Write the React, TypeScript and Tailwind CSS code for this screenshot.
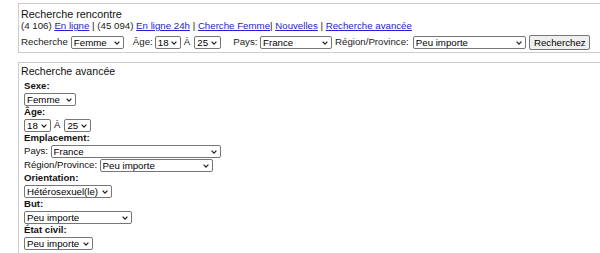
import React from "react";

type SelProps = { className: string; value: string; options?: string[] };

function Sel({ className, value, options }: SelProps) {
  const opts = options ?? [value];
  return (
    <span className={`relative inline-block h-[13px] shrink-0 ${className}`}>
      <select
        defaultValue={value}
        className="block h-full w-full appearance-none rounded-[2px] border border-[#767676] bg-white py-0 pl-[2px] pr-[9px] text-[9.7px] leading-[11px] text-black outline-none"
      >
        {opts.map((o) => (
          <option key={o} value={o}>
            {o}
          </option>
        ))}
      </select>
      <svg
        className="pointer-events-none absolute right-[4px] top-[5px]"
        width="6"
        height="4"
        viewBox="0 0 6 4"
      >
        <path d="M0.6 0.6 L3 3.1 L5.4 0.6" stroke="#222" strokeWidth="1.25" fill="none" />
      </svg>
    </span>
  );
}

function A({ children }: { children: React.ReactNode }) {
  return (
    <a href="#" className="text-[#2323d6] underline">
      {children}
    </a>
  );
}

export default function App() {
  return (
    <div className="h-[253px] w-[600px] overflow-hidden bg-white font-['Liberation_Sans',Arial,sans-serif] text-[#111]">
      {/* Box 1 */}
      <div className="ml-[18px] mt-[3px] w-[640px] border border-[#cccccc] pb-[1px] pl-[2px] pt-[4px]">
        <div className="text-[10.8px] leading-[12px]">Recherche rencontre</div>
        <div className="whitespace-nowrap text-[9.7px] leading-[11px] text-[#222]">
          (4 106) <A>En ligne</A> | (45 094) <A>En ligne 24h</A> | <A>Cherche Femme</A>| <A>Nouvelles</A> |{" "}
          <A>Recherche avancée</A>
        </div>
        <div className="mt-[2px] flex h-[18px] items-center whitespace-nowrap text-[9.7px] text-[#222]">
          <span>Recherche</span>
          <Sel className="ml-[3px] w-[53px]" value="Femme" options={["Femme", "Homme"]} />
          <span className="ml-[9px]">Âge:</span>
          <Sel className="ml-[2px] w-[26px]" value="18" />
          <span className="ml-[3px]">À</span>
          <Sel className="ml-[4px] w-[27px]" value="25" />
          <span className="ml-[12px]">Pays:</span>
          <Sel className="ml-[2.5px] w-[72px]" value="France" />
          <span className="ml-[3px]">Région/Province:</span>
          <Sel className="ml-[4px] w-[113px]" value="Peu importe" />
          <button className="ml-[3.5px] h-[15px] w-[61px] rounded-[2px] border border-[#767676] bg-[#efefef] p-0 text-[9.7px] leading-[13px] text-black">
            Recherchez
          </button>
        </div>
      </div>

      {/* Box 2 */}
      <div className="ml-[18px] mt-[9px] w-[640px] border border-[#cccccc] pl-[2px] pt-[2px]">
        <div className="text-[10.6px] leading-[13px]">Recherche avancée</div>
        <div className="ml-[3px] mt-[2px] text-[9.6px] text-[#111]">
          <div className="font-bold leading-[12px]">Sexe:</div>
          <div className="flex h-[14px] items-center">
            <Sel className="w-[52px]" value="Femme" options={["Femme", "Homme"]} />
          </div>
          <div className="font-bold leading-[12px]">Âge:</div>
          <div className="flex h-[14px] items-center">
            <Sel className="w-[27px]" value="18" />
            <span className="ml-[3px]">À</span>
            <Sel className="ml-[4px] w-[27px]" value="25" />
          </div>
          <div className="font-bold leading-[12px]">Emplacement:</div>
          <div className="flex h-[14px] items-center">
            <span>Pays:</span>
            <Sel className="ml-[2.5px] w-[170px]" value="France" />
          </div>
          <div className="flex h-[14px] items-center">
            <span>Région/Province:</span>
            <Sel className="ml-[2.5px] w-[113px]" value="Peu importe" />
          </div>
          <div className="font-bold leading-[12px]">Orientation:</div>
          <div className="flex h-[14px] items-center">
            <Sel className="w-[88px]" value="Hétérosexuel(le)" />
          </div>
          <div className="font-bold leading-[12px]">But:</div>
          <div className="flex h-[14px] items-center">
            <Sel className="w-[108px]" value="Peu importe" />
          </div>
          <div className="font-bold leading-[12px]">État civil:</div>
          <div className="flex h-[14px] items-center">
            <Sel className="w-[69px]" value="Peu importe" />
          </div>
        </div>
        <button className="ml-[1px] h-[15px] w-[60px] rounded-[2px] border border-[#767676] bg-[#efefef] p-0 text-[9.7px] leading-[13px] text-black">
          Recherchez
        </button>
      </div>
    </div>
  );
}
